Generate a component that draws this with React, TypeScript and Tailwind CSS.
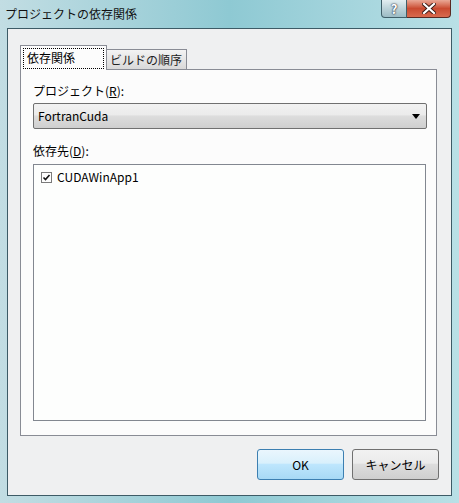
const jp = { fontFamily: '"Noto Sans CJK JP", "Liberation Sans", sans-serif' };

function TitleButtons() {
  return (
    <div className="flex h-[18px] mr-[8px]">
      <div className="w-[26px] h-full border border-[#3f5f69] border-t-0 rounded-bl-[4px] bg-gradient-to-b from-[#e3eef1] via-[#bcd3d9] to-[#9cbcc5] flex items-center justify-center">
        <span className="text-white text-[13px] font-bold leading-none [text-shadow:0_0_1px_#223,0_0_2px_#223]" style={jp}>
          ?
        </span>
      </div>
      <div className="w-[44px] h-full border border-[#5a2a22] border-t-0 border-l-0 rounded-br-[4px] bg-gradient-to-b from-[#e9a896] via-[#c94a30] to-[#d86a4e] flex items-center justify-center">
        <svg width="14" height="11" viewBox="0 0 14 11">
          <path d="M2 1 L12 10 M12 1 L2 10" stroke="#3a1a14" strokeWidth="4" strokeLinecap="square" />
          <path d="M2 1 L12 10 M12 1 L2 10" stroke="#ffffff" strokeWidth="2.2" strokeLinecap="square" />
        </svg>
      </div>
    </div>
  );
}

function CheckBox() {
  return (
    <svg width="11" height="11" viewBox="0 0 11 11">
      <rect x="0.5" y="0.5" width="10" height="10" fill="#fdfdfd" stroke="#7a7a7a" />
      <path d="M2.5 5.5 L4.5 7.5 L8.5 3" stroke="#111" strokeWidth="1.6" fill="none" />
    </svg>
  );
}

export default function App() {
  return (
    <div
      className="w-[459px] h-[503px] flex flex-col bg-gradient-to-r from-[#c2dde3] via-[#8ec9d3] to-[#b9e0e6] text-[12px] text-black"
      style={jp}
    >
      <div className="h-[28px] flex items-start justify-between">
        <span className="pl-[5px] pt-[6px] leading-[16px] text-[#111]">プロジェクトの依存関係</span>
        <TitleButtons />
      </div>

      <div className="flex-1 mx-[7px] mb-[7px] border border-[#3d5b66] bg-[#eff0f1] flex flex-col">
        <div className="pl-[12px] pr-[14px] pt-[16px]">
          <div className="flex items-end h-[24px]">
            <div className="relative z-10 w-[87px] h-[25px] -mb-px border border-[#898c95] border-b-0 bg-[#fcfcfc] p-[2px]">
              <div className="h-[21px] border border-dotted border-black px-[3px] leading-[18px] whitespace-nowrap">依存関係</div>
            </div>
            <div className="w-[80px] h-[20px] border border-[#898c95] border-l-0 border-b-0 bg-gradient-to-b from-[#f3f3f3] to-[#d9d9d9] pl-[3px] leading-[19px] text-[#222] whitespace-nowrap overflow-hidden">
              ビルドの順序
            </div>
          </div>

          <div className="h-[367px] border border-[#898c95] bg-[#fcfcfc] pt-[13px] pl-[12px] pr-[9px]">
            <div className="leading-[16px]">
              プロジェクト(<span className="underline">R</span>):
            </div>
            <div className="mt-[4px] h-[26px] rounded-[2px] border border-[#707070] bg-[linear-gradient(#f2f2f2_0%,#ebebeb_45%,#dddddd_50%,#cfcfcf_100%)] flex items-center justify-between pl-[4px] pr-[6px]">
              <span className="leading-[16px]">FortranCuda</span>
              <svg width="8" height="5" viewBox="0 0 8 5">
                <path d="M0 0 H8 L4 5 Z" fill="#000" />
              </svg>
            </div>

            <div className="mt-[14px] leading-[16px]">
              依存先(<span className="underline">D</span>):
            </div>
            <div className="mt-[5px] mr-px h-[257px] border border-[#828790] bg-[#fdfefd] pt-[6px] pl-[7px]">
              <div className="flex items-center gap-[5px] h-[12px]">
                <CheckBox />
                <span className="leading-[16px]">CUDAWinApp1</span>
              </div>
            </div>
          </div>
        </div>

        <div className="mt-[13px] pr-[12px] flex justify-end gap-[8px]">
          <button className="w-[87px] h-[31px] rounded-[3px] border border-[#3c7fb1] bg-[linear-gradient(#eaf6fd_0%,#d9f0fc_45%,#bee6fd_50%,#a7d9f5_100%)] text-[12px]">
            OK
          </button>
          <button className="w-[87px] h-[31px] rounded-[3px] border border-[#707070] bg-[linear-gradient(#f2f2f2_0%,#ebebeb_45%,#dddddd_50%,#cfcfcf_100%)] text-[12px]">
            キャンセル
          </button>
        </div>
      </div>
    </div>
  );
}
